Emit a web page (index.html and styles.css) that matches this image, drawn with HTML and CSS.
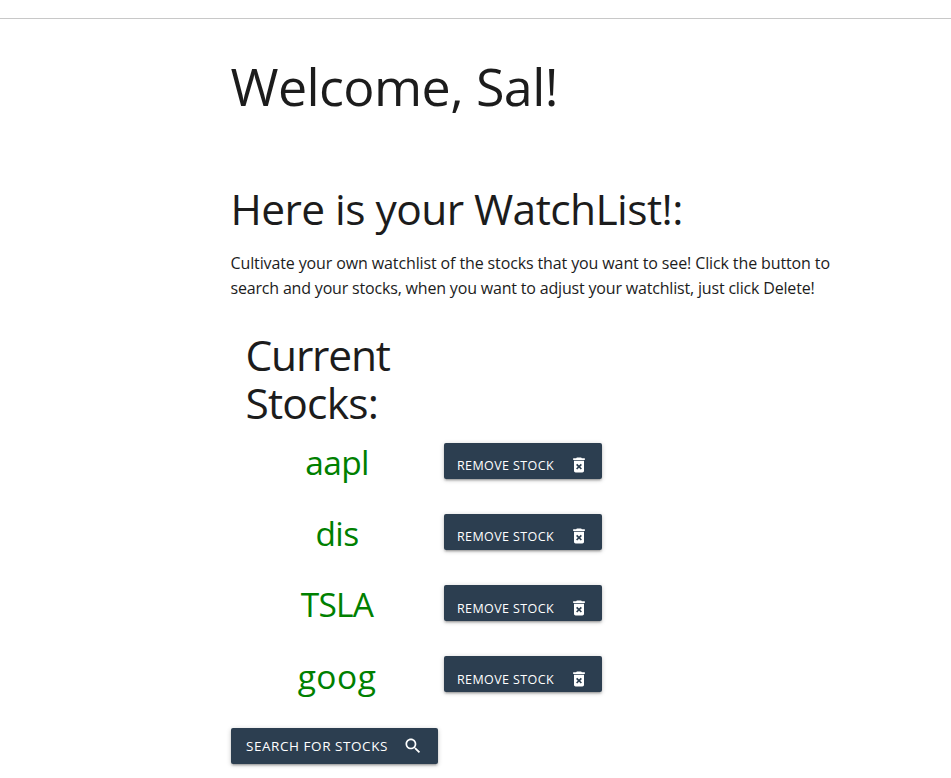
FILE: index.html
```html
<!DOCTYPE html>
<html lang="en">
<head>
<meta charset="utf-8">
<title>WatchList</title>
<link rel="stylesheet" href="styles.css">
</head>
<body>
<svg width="0" height="0" class="symbols">
  <symbol id="trash" viewBox="0 0 24 24"><path d="M6 19c0 1.1.9 2 2 2h8c1.1 0 2-.9 2-2V7H6v12zm2.46-7.12l1.41-1.41L12 12.59l2.12-2.12 1.41 1.41L13.41 14l2.12 2.12-1.41 1.41L12 15.41l-2.12 2.12-1.41-1.41L10.59 14l-2.13-2.12zM15.5 4l-1-1h-5l-1 1H5v2h14V4z"/></symbol>
  <symbol id="search" viewBox="0 0 24 24"><path d="M15.5 14h-.79l-.28-.27C15.41 12.59 16 11.11 16 9.5 16 5.91 13.09 3 9.5 3S3 5.91 3 9.5 5.91 16 9.5 16c1.61 0 3.09-.59 4.23-1.57l.27.28v.79l5 4.99L20.49 19l-4.99-5zm-6 0C7.01 14 5 11.99 5 9.5S7.01 5 9.5 5 14 7.01 14 9.5 11.99 14 9.5 14z"/></symbol>
</svg>
<header class="topbar"></header>
<main class="container">
  <h2 class="welcome">Welcome, Sal!</h2>
  <h3 class="heading">Here is your WatchList!:</h3>
  <p class="intro"><span class="line1">Cultivate your own watchlist of the stocks that you want to see! Click the button to</span><br><span class="line2">search and your stocks, when you want to adjust your watchlist, just click Delete!</span></p>
  <h3 class="current"><span class="word1">Current</span><br><span class="word2">Stocks:</span></h3>
  <ul class="stocks">
    <li class="stock"><span class="ticker">aapl</span><button class="btn remove"><span>Remove Stock</span><svg class="icon"><use href="#trash"/></svg></button></li>
    <li class="stock"><span class="ticker">dis</span><button class="btn remove"><span>Remove Stock</span><svg class="icon"><use href="#trash"/></svg></button></li>
    <li class="stock"><span class="ticker">TSLA</span><button class="btn remove low"><span>Remove Stock</span><svg class="icon"><use href="#trash"/></svg></button></li>
    <li class="stock"><span class="ticker goog">goog</span><button class="btn remove low"><span>Remove Stock</span><svg class="icon"><use href="#trash"/></svg></button></li>
  </ul>
  <button class="btn search"><span>Search for Stocks</span><svg class="icon"><use href="#search"/></svg></button>
</main>
</body>
</html>
```
FILE: styles.css
```css
* { box-sizing: border-box; }
body { margin: 0; background: #fff; color: #1c1c1c; font-family: "Open Sans", "Noto Sans", sans-serif; height: 778px; overflow: hidden; }
.symbols { display: block; height: 0; }
.topbar { height: 19px; border-bottom: 1px solid #c8c8c8; }
.container { padding-left: 230.5px; }
h2, h3, p { margin: 0; font-weight: 400; white-space: nowrap; }
.welcome { padding-top: 37px; font-size: 52px; line-height: 60px; letter-spacing: -0.6px; }
.heading { padding-top: 69px; font-size: 42.5px; line-height: 48px; letter-spacing: -0.57px; }
.intro { padding-top: 18px; font-size: 16px; line-height: 25px; }
.line1 { letter-spacing: -0.12px; }
.line2 { letter-spacing: -0.18px; }
.current { padding: 30px 0 0 15px; font-size: 42.5px; line-height: 48px; }
.word1 { letter-spacing: -1.2px; }
.word2 { letter-spacing: -.8px; }
.stocks { list-style: none; margin: 0; padding: 16px 0 0 .5px; }
.stock { display: grid; grid-template-columns: 213px 158px; height: 71px; align-items: start; }
.stock:last-child { height: 72px; }
.ticker { text-align: center; color: green; font-size: 33.5px; line-height: 38px; letter-spacing: -.7px; padding-right: 1px; }
.goog { letter-spacing: .5px; padding-top: 1px; }
.btn { display: flex; align-items: center; height: 36px; border: 0; border-radius: 2px; background: #2c3e50; color: #fff; font-family: inherit; text-transform: uppercase; white-space: nowrap; box-shadow: 0 2px 2px 0 rgba(0,0,0,.14), 0 3px 1px -2px rgba(0,0,0,.12), 0 1px 5px 0 rgba(0,0,0,.2); }
.icon { display: block; fill: #fff; flex: none; width: 20px; height: 20px; margin-left: auto; }
.remove { width: 158px; padding: 8px 13px 0 13px; font-size: 12.5px; letter-spacing: .4px; }
.remove.low { padding-top: 10px; }
.search { width: 207px; margin-left: .5px; padding: 0 15px; font-size: 13.5px; letter-spacing: .55px; }
```
